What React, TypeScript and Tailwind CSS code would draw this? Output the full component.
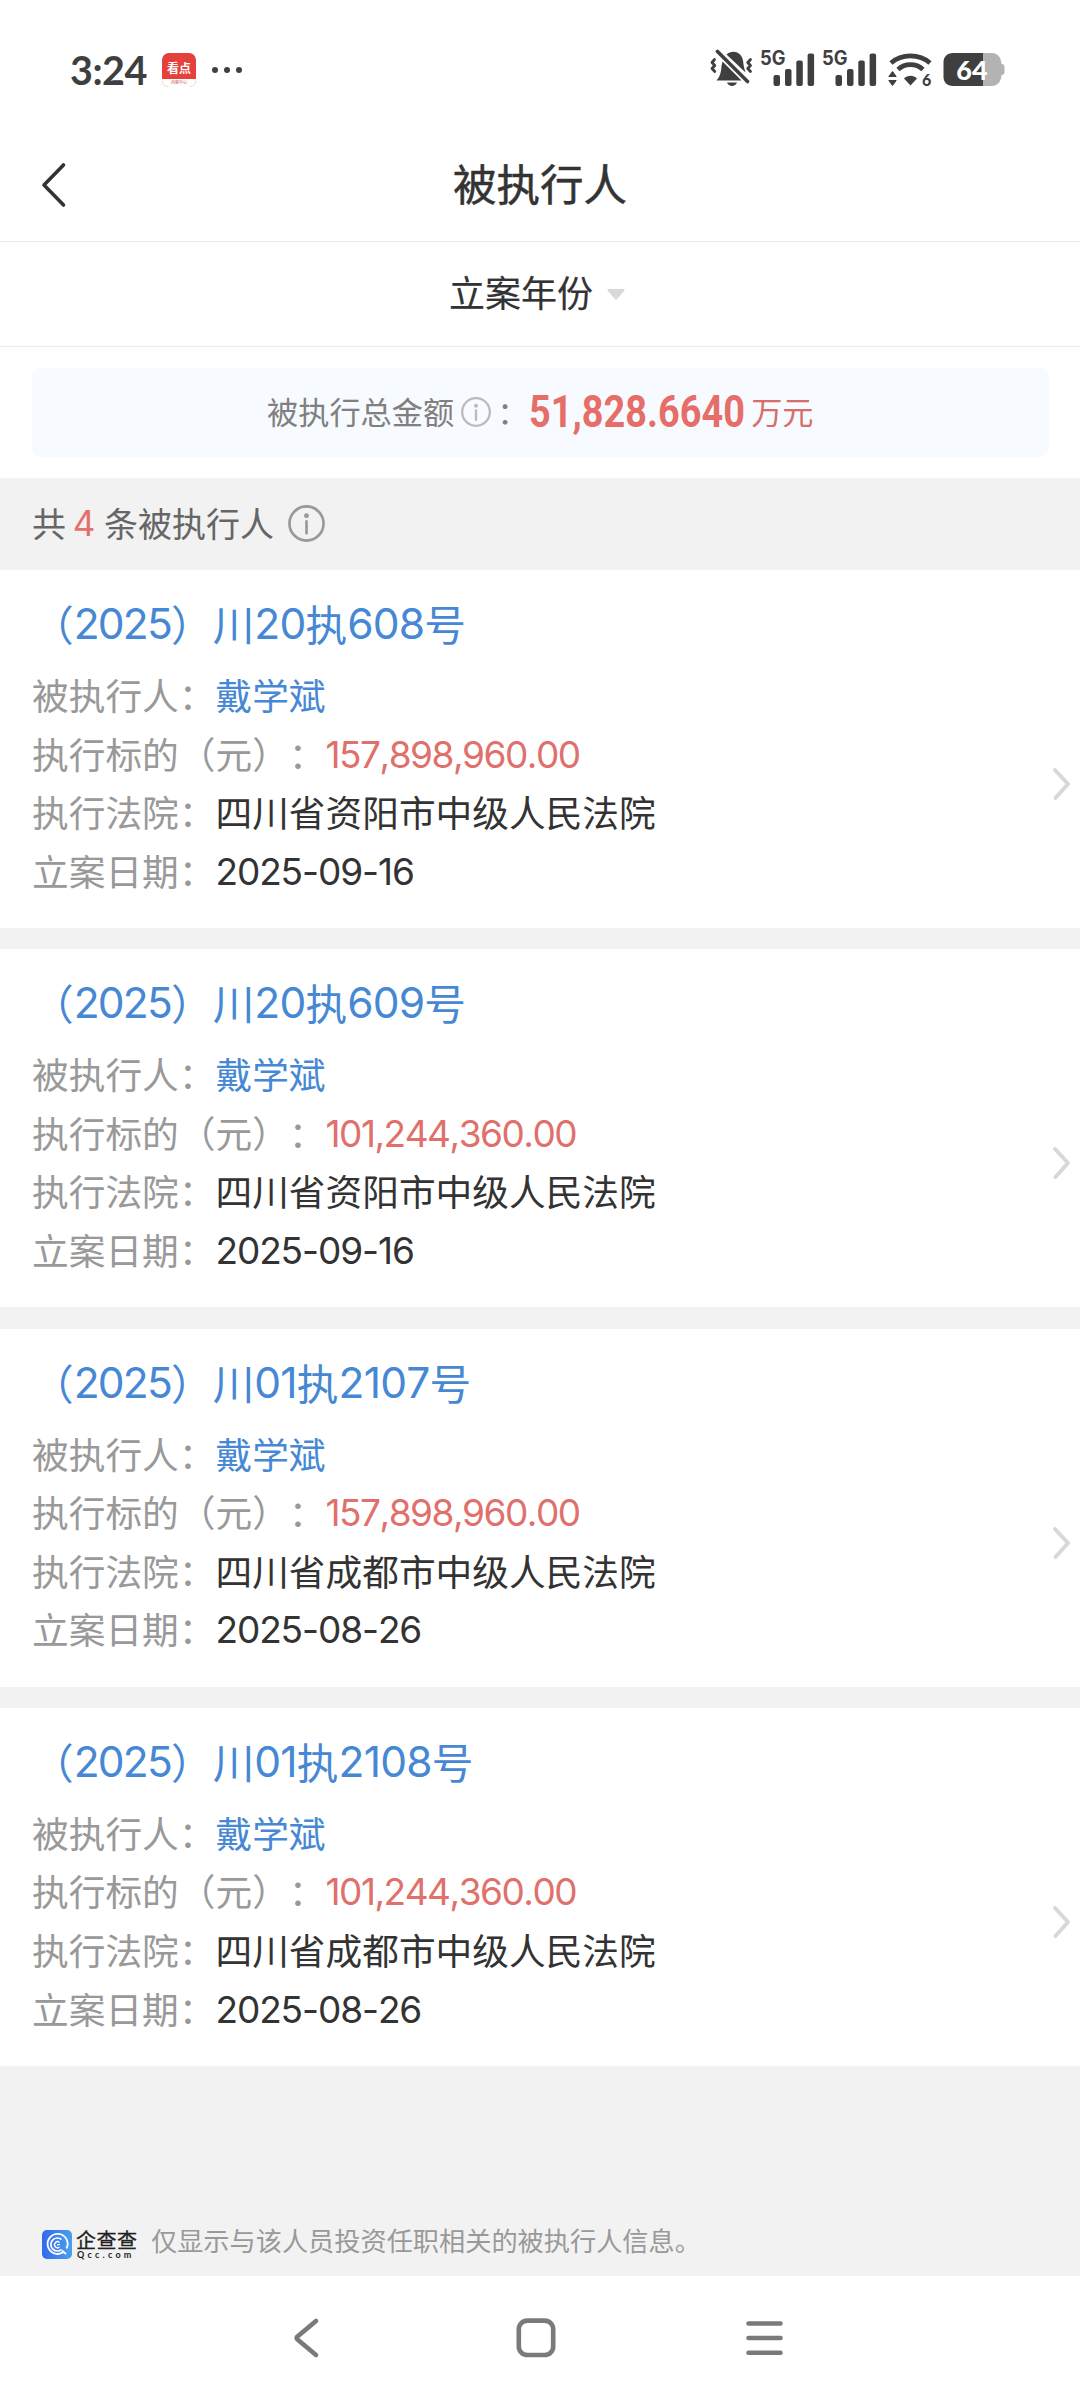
import React from 'react';

interface CaseRecord {
  year: string;
  court: string;
  code: string;
  serial: string;
  person: string;
  amount: string;
  date: string;
}

const records: CaseRecord[] = [
  { year: '2025', code: '20', serial: '608', person: '戴学斌', amount: '157,898,960.00', court: '四川省资阳市中级人民法院', date: '2025-09-16' },
  { year: '2025', code: '20', serial: '609', person: '戴学斌', amount: '101,244,360.00', court: '四川省资阳市中级人民法院', date: '2025-09-16' },
  { year: '2025', code: '01', serial: '2107', person: '戴学斌', amount: '157,898,960.00', court: '四川省成都市中级人民法院', date: '2025-08-26' },
  { year: '2025', code: '01', serial: '2108', person: '戴学斌', amount: '101,244,360.00', court: '四川省成都市中级人民法院', date: '2025-08-26' },
];

const InfoIcon: React.FC<{ className: string; strokeWidth: number }> = ({ className, strokeWidth }) => (
  <svg viewBox="0 0 36 36" fill="none" stroke="currentColor" strokeWidth={strokeWidth} className={className}>
    <circle cx="18" cy="18" r="16.6" />
    <path d="M18 16v11.5" strokeLinecap="round" />
    <circle cx="18" cy="10.5" r="2.4" fill="currentColor" stroke="none" />
  </svg>
);

const Signal: React.FC = () => (
  <svg width="56" height="48" viewBox="0 -8 56 48" className="-mt-[8px]" fill="#3f3f3f">
    <text x="0" y="17" fontSize="19.5" fontWeight="700" fontFamily="Inter" textLength="25.5" lengthAdjust="spacingAndGlyphs">5G</text>
    <rect x="13.5" y="27" width="6.5" height="11" rx="2" />
    <rect x="25" y="21" width="6.5" height="17" rx="2" />
    <rect x="36.3" y="12.5" width="6.5" height="25.5" rx="2" />
    <rect x="47.6" y="5.5" width="6.5" height="32.5" rx="2" />
  </svg>
);

const StatusBar: React.FC = () => (
  <div className="flex h-[137px] items-start justify-between pl-[70px] pr-[74px] pt-[48px] text-[#3f3f3f]">
    <div className="flex h-[44px] items-center">
      <span className="w-[92px] font-['Lato'] text-[39.5px] font-bold leading-[44px] tracking-[-0.5px]">3:24</span>
      <span className="flex h-[34px] w-[34px] flex-col overflow-hidden rounded-[7px] bg-[#e5403c] text-center text-white">
        <span className="h-[26px] text-[12px] font-bold leading-[29px]">看点</span>
        <span className="h-[8px] bg-white text-[4px] leading-[7px] text-[#c0504a]">内容中心</span>
      </span>
      <span className="ml-[16px] flex gap-[6px]">
        <i className="h-[6px] w-[6px] rounded-full bg-[#3f3f3f]" />
        <i className="h-[6px] w-[6px] rounded-full bg-[#3f3f3f]" />
        <i className="h-[6px] w-[6px] rounded-full bg-[#3f3f3f]" />
      </span>
    </div>

    <div className="flex h-[40px] items-start">
      {/* Muted bell */}
      <svg width="50" height="40" viewBox="0 0 50 40" fill="none" stroke="#3f3f3f" strokeLinecap="round" strokeLinejoin="round">
        <path d="M12.500 13.500 31.500 32.500H6.500C10.500 28 11 24 11.500 18Z" fill="#3f3f3f" stroke="none" />
        <path d="M16.500 6.500C22 1.500 31.500 3.500 33 12.500 33.500 17 34 20 35.500 24.500Z" fill="#3f3f3f" stroke="none" />
        <path d="M17 34.500h10c-1.500 4.500-8.500 4.500-10 0Z" fill="#3f3f3f" stroke="none" />
        <path d="M7.500 3.500 37.500 33.500" strokeWidth="3.600" />
        <path d="M4.500 11.500 2 14.500l2.800 3-2.800 3 2.800 3" strokeWidth="2.800" />
        <path d="M40.500 11.500l-2.800 3 2.800 3-2.800 3 2.800 3" strokeWidth="2.800" />
      </svg>
      <span className="flex gap-[6px]">
        <Signal />
        <Signal />
      </span>
      {/* Wifi 6 */}
      <svg width="46" height="48" viewBox="0 -8 46 48" className="-mt-[8px] ml-[10px]" fill="none" stroke="#3f3f3f">
        <path d="M3 15C13.500 5.500 31.500 5.500 42 15" strokeWidth="4.600" />
        <path d="M10 21.500C17 15 28 15 35 21.500" strokeWidth="4.600" />
        <path d="M22.500 37.500 16 30.500c3.500-3.600 9.500-3.600 13 0Z" fill="#3f3f3f" stroke="none" />
        <path d="M0.800 28.500 4.500 23.500 8.200 28.500ZM0.800 32.500 4.500 37.500 8.200 32.500Z" fill="#3f3f3f" stroke="#3f3f3f" />
        <text x="34" y="38" fontSize="16" fontWeight="900" fontFamily="Lato" fill="#3f3f3f" stroke="none">6</text>
      </svg>
      {/* Battery */}
      <span className="relative ml-[9px] mt-[5px] h-[33px] w-[63px]">
        <svg width="63" height="33" viewBox="0 0 63 33">
          <path d="M40 0H49C54.500 0 58 4 58.500 11 60.500 11 61.500 12 61.500 14v5c0 2-1 3-3 3C58 29 54.500 33 49 33H40Z" fill="#b3b3b3" />
          <path d="M10 0H40V33H10C4 33 0.500 29 0.500 24V9C0.500 4 4 0 10 0Z" fill="#3f3f3f" />
        </svg>
        <span className="absolute inset-0 pr-[5px] text-center font-['Lato'] text-[27px] font-black leading-[33px] text-white">64</span>
      </span>
    </div>
  </div>
);

const CaseCard: React.FC<{ record: CaseRecord }> = ({ record }) => (
  <div className="flex h-[358px] items-start justify-between bg-white pl-[32px] pr-[8px]">
    <div className="pt-[23px] text-[36.7px] leading-[58.600px] text-[#999]">
      <h2 className="flex h-[60px] items-center text-[41.7px] leading-[60px] text-[#4788d4]">
        （
        <span className="pt-[2px] font-['Inter'] text-[42.500px] tracking-[-1.800px]">{record.year}</span>
        ）川
        <span className="pt-[2px] font-['Inter'] text-[42.500px] tracking-[-0.800px]">{record.code}</span>
        执
        <span className="pt-[2px] font-['Inter'] text-[42.500px] tracking-[-0.800px]">{record.serial}</span>
        号
      </h2>
      <div className="mt-[12px] flex">
        被执行人：<span className="text-[#4788d4]">{record.person}</span>
      </div>
      <div className="flex">
        执行标的（元）：
        <span className="-mb-[2px] mt-[2px] font-['Inter'] text-[37px] tracking-[-1.500px] text-[#df706b]">{record.amount}</span>
      </div>
      <div className="flex">
        执行法院：<span className="text-[#333]">{record.court}</span>
      </div>
      <div className="flex">
        立案日期：
        <span className="-mb-[2px] mt-[2px] font-['Inter'] text-[37px] tracking-[-1.100px] text-[#333]">{record.date}</span>
      </div>
    </div>
    <svg width="20" height="36" viewBox="0 0 20 36" className="mt-[196px]" fill="none" stroke="#d8d8d8" strokeWidth="4" strokeLinecap="round" strokeLinejoin="round">
      <path d="M3 4 16 18 3.500 32" />
    </svg>
  </div>
);

const App: React.FC = () => {
  return (
    <div className="flex h-[2400px] w-[1080px] flex-col overflow-hidden bg-white font-['Noto_Sans_CJK_SC',sans-serif] [font-kerning:none] [text-spacing-trim:space-all]">
      <StatusBar />

      {/* Title bar */}
      <header className="grid h-[105px] grid-cols-3 items-center border-b border-[#ebebeb] pb-[13px]">
        <svg width="30" height="48" viewBox="0 0 30 48" className="ml-[38px] mt-[5px]" fill="none" stroke="#333" strokeWidth="3.600" strokeLinecap="round" strokeLinejoin="round">
          <path d="M25.500 4 6 24 25.500 44" />
        </svg>
        <h1 className="text-center text-[43.500px] leading-[60px] text-[#333] [-webkit-text-stroke:0.5px_#333]">被执行人</h1>
      </header>

      {/* Year filter */}
      <div className="flex h-[105px] items-center justify-center border-b border-[#ebebeb] pr-[6px] text-[36px] text-[#333]">
        <span className="-mt-[7px] [-webkit-text-stroke:0.2px_#333]">立案年份</span>
        <svg width="18" height="11" viewBox="0 0 18 11" className="ml-[14px]" fill="#d8d8d8">
          <path d="M2 0h14q2.500 0 1 2L10.200 10q-1.200 1.200-2.400 0L1 2Q-.5 0 2 0Z" />
        </svg>
      </div>

      {/* Total amount */}
      <div className="h-[131px] pl-[32px] pr-[31px] pt-[21px]">
        <div className="flex h-[89px] items-center rounded-[9px] bg-[#f7fbff] pb-[2px] pl-[235px] text-[31.2px] text-[#808080]">
          被执行总金额
          <InfoIcon className="ml-[7px] h-[30px] w-[30px] text-[#bbb]" strokeWidth={2.8} />
          <span className="w-[38px] pl-[6px]">：</span>
          <span className="w-[222px] whitespace-nowrap">
            <span className="inline-block origin-left scale-x-[0.842] font-['Roboto'] text-[45px] font-bold text-[#e66e69]">51,828.6640</span>
          </span>
          <span className="text-[#d66f6a]">万元</span>
        </div>
      </div>

      <div className="flex h-[92px] items-center bg-[#f2f2f2] pb-[3px] pl-[32px] text-[34px] text-[#666]">
        共<span className="w-[38px] pr-[2px] pt-[1px] text-center font-['Inter'] text-[35px] text-[#e3706b]">4</span>条被执行人
        <InfoIcon className="ml-[14px] mt-[2px] h-[37px] w-[37px] text-[#999]" strokeWidth={2.6} />
      </div>

      {/* Case list */}
      <main className="flex h-[1706px] flex-col gap-[21.300px] bg-[#f2f2f2]">
        {records.map((record, i) => (
          <CaseCard key={i} record={record} />
        ))}
        <div className="-mt-[21px] flex flex-1 items-end pb-[17px] pl-[42px] text-[26.200px] leading-[30px] text-[#999]">
          <svg width="30" height="29" viewBox="0 0 30 29" fill="none" stroke="#fff">
            <defs>
              <linearGradient id="qcc" x1="0" x2="1">
                <stop offset="0" stopColor="#3369ec" />
                <stop offset="1" stopColor="#49a0ef" />
              </linearGradient>
            </defs>
            <rect width="30" height="29" rx="5" fill="url(#qcc)" stroke="none" />
            <path d="M21.500 22A10 10 0 1 1 24.500 18.500M20 20.500l4 3.500" strokeWidth="1.800" />
            <path d="M19.500 9.500a6.500 6.500 0 1 0 0 10" strokeWidth="1.700" />
            <path d="M17.500 12.500a3 3 0 1 0 0 4.500M15 14.600h3" strokeWidth="1.400" />
          </svg>
          <div className="ml-[4px] flex h-[29px] w-[75px] flex-col text-[#222]">
            <span className="text-[20px] leading-[20px] tracking-[0.500px] [-webkit-text-stroke:0.3px_#222]">企查查</span>
            <span className="pl-[1px] pt-[1px] font-['Lato'] text-[9px] font-bold leading-[8px] tracking-[3.200px]">Qcc.com</span>
          </div>
          <span className="mb-[4px]">仅显示与该人员投资任职相关的被执行人信息。</span>
        </div>
      </main>

      {/* System navigation */}
      <nav className="flex flex-1 items-start pl-[289px] pt-[40px] text-[#7a7a7a]">
        <svg width="32" height="44" viewBox="0 0 32 44" fill="none" stroke="currentColor" strokeWidth="4.600" strokeLinecap="round" strokeLinejoin="round">
          <path d="M27 5 8.500 20.500q-1.500 1.500 0 3L27 39" />
        </svg>
        <svg width="44" height="44" viewBox="0 0 44 44" className="ml-[193px]" fill="none" stroke="currentColor" strokeWidth="4.600">
          <rect x="4.800" y="4.600" width="34.400" height="34.400" rx="8.500" />
        </svg>
        <svg width="44" height="44" viewBox="0 0 44 44" className="ml-[184px]" fill="none" stroke="currentColor" strokeWidth="4.600" strokeLinecap="round">
          <path d="M6.500 7.500h32M6.500 22h32M6.500 36.700h32" />
        </svg>
      </nav>
    </div>
  );
};

export default App;
